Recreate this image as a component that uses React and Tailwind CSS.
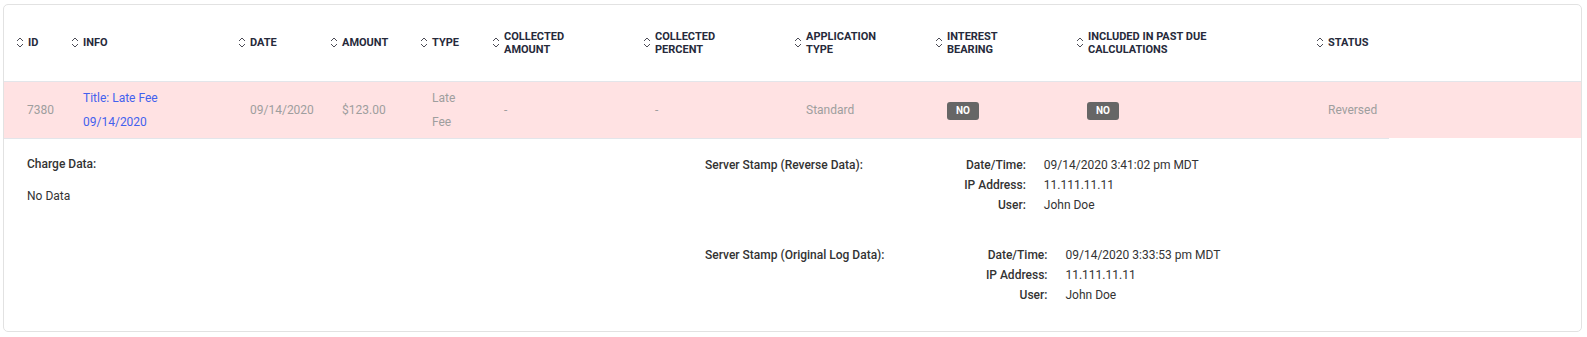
const columns = [
  { key: 'id', label: ['ID'], width: 67, first: true },
  { key: 'info', label: ['INFO'], width: 167 },
  { key: 'date', label: ['DATE'], width: 92 },
  { key: 'amount', label: ['AMOUNT'], width: 90 },
  { key: 'type', label: ['TYPE'], width: 72 },
  { key: 'collected', label: ['COLLECTED', 'AMOUNT'], width: 151 },
  { key: 'percent', label: ['COLLECTED', 'PERCENT'], width: 151 },
  { key: 'appType', label: ['APPLICATION', 'TYPE'], width: 141 },
  { key: 'interest', label: ['INTEREST', 'BEARING'], width: 141 },
  { key: 'pastDue', label: ['INCLUDED IN PAST DUE', 'CALCULATIONS'], width: 240 },
  { key: 'status', label: ['STATUS'], width: 73 },
]

const stamps = [
  {
    title: 'Server Stamp (Reverse Data):',
    rows: [
      ['Date/Time:', '09/14/2020 3:41:02 pm MDT'],
      ['IP Address:', '11.111.11.11'],
      ['User:', 'John Doe'],
    ],
  },
  {
    title: 'Server Stamp (Original Log Data):',
    rows: [
      ['Date/Time:', '09/14/2020 3:33:53 pm MDT'],
      ['IP Address:', '11.111.11.11'],
      ['User:', 'John Doe'],
    ],
  },
]

function SortIcon() {
  return (
    <svg width="8" height="13" viewBox="0 0 8 13" className="shrink-0">
      <path d="M1 5 L4 2 L7 5" fill="none" stroke="#4b4b55" strokeWidth="1" />
      <path d="M1 8 L4 11 L7 8" fill="none" stroke="#4b4b55" strokeWidth="1" />
    </svg>
  )
}

function Badge({ children }) {
  return (
    <span className="inline-flex items-center justify-center w-[32px] h-[18px] rounded-[3px]
                     bg-[#666666] text-white text-[10px] font-bold leading-none">
      {children}
    </span>
  )
}

export default function App() {
  const cell = 'border-b border-[#e3e5ea] align-middle'
  return (
    <div className="pt-[4px] px-[3px] bg-white" style={{ fontFamily: 'Roboto, "Liberation Sans", sans-serif' }}>
      <div className="w-[1579px] border border-[#e2e2e2] rounded-[5px] overflow-hidden bg-white">
        <table className="w-full table-fixed border-collapse">
          <colgroup>
            {columns.map((c) => (
              <col key={c.key} style={{ width: c.width }} />
            ))}
            <col />
          </colgroup>
          <thead>
            <tr>
              {columns.map((c) => (
                <th key={c.key} className={`h-[76px] p-0 text-left font-bold ${cell} ${c.first ? 'pl-[12px]' : ''}`}>
                  <div className="flex items-center gap-[4px]">
                    <SortIcon />
                    <div className="text-[11px] leading-[13px] text-[#262a3b] whitespace-nowrap">
                      {c.label.map((l) => (
                        <div key={l}>{l}</div>
                      ))}
                    </div>
                  </div>
                </th>
              ))}
              <th className={`p-0 ${cell}`} />
            </tr>
          </thead>
          <tbody>
            <tr className="bg-[#ffe2e3] text-[12px] text-[#9e9e9e]">
              <td className={`h-[57px] p-0 pl-[23px] pt-[1px] ${cell}`}>7380</td>
              <td className={`p-0 pl-[12px] pt-[1px] leading-[24px] text-[#4361ee] ${cell}`}>
                <div>Title: Late Fee</div>
                <div>09/14/2020</div>
              </td>
              <td className={`p-0 pl-[12px] pt-[1px] ${cell}`}>09/14/2020</td>
              <td className={`p-0 pl-[12px] pt-[1px] ${cell}`}>$123.00</td>
              <td className={`p-0 pl-[12px] pt-[1px] leading-[24px] ${cell}`}>
                <div>Late</div>
                <div>Fee</div>
              </td>
              <td className={`p-0 pl-[12px] pt-[1px] ${cell}`}>-</td>
              <td className={`p-0 pl-[12px] pt-[1px] ${cell}`}>-</td>
              <td className={`p-0 pl-[12px] pt-[1px] ${cell}`}>Standard</td>
              <td className={`p-0 pl-[12px] pt-[2px] ${cell}`}><Badge>NO</Badge></td>
              <td className={`p-0 pl-[11px] pt-[2px] ${cell}`}><Badge>NO</Badge></td>
              <td className={`p-0 pl-[12px] pt-[1px] ${cell}`}>Reversed</td>
              <td className="p-0" />
            </tr>
          </tbody>
        </table>

        <div className="flex items-start pt-[15px] pb-[26px] text-[12px] text-[#333333]">
          <div className="w-[701px] shrink-0 pl-[23px] leading-[20px]">
            <div className="font-medium">Charge Data:</div>
            <div className="mt-[12px]">No Data</div>
          </div>
          <div className="flex flex-col gap-[30px] pt-[1px]">
            {stamps.map((s) => (
              <div key={s.title} className="flex items-start leading-[20px]">
                <div className="font-medium whitespace-nowrap">{s.title}</div>
                <div className="grid grid-cols-[163px_auto] gap-x-[18px]">
                  {s.rows.map(([k, v]) => (
                    <div key={k} className="contents">
                      <div className="text-right font-medium">{k}</div>
                      <div className="whitespace-nowrap">{v}</div>
                    </div>
                  ))}
                </div>
              </div>
            ))}
          </div>
        </div>
      </div>
    </div>
  )
}
